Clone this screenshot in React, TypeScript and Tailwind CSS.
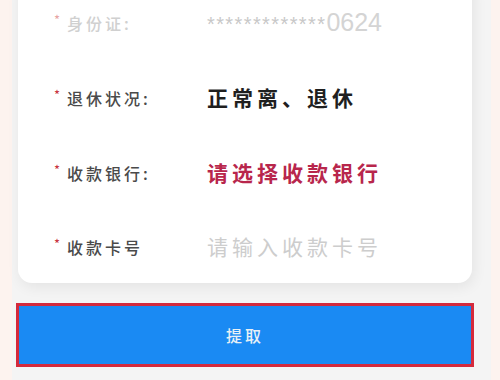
export default function App() {
  const rows = [
    { label: "身份证:", value: "*************0624", kind: "id", faded: true },
    { label: "退休状况:", value: "正常离、退休", kind: "bold" },
    { label: "收款银行:", value: "请选择收款银行", kind: "red" },
    { label: "收款卡号", value: "请输入收款卡号", kind: "placeholder" },
  ];

  return (
    <div
      className="w-[500px] h-[380px] overflow-hidden bg-[#fdf3ef] pl-[12px] pr-[9px]"
      style={{ fontFamily: '"Noto Sans CJK SC", "Noto Sans", sans-serif' }}
    >
      <div className="h-full bg-[#f4f4f4] flex flex-col">
        {/* form card */}
        <div className="ml-[6px] w-[454px] -mt-[15px] bg-white rounded-b-[14px] shadow-[2px_4px_14px_rgba(0,0,0,0.07)]">
          {rows.map((r, i) => (
            <div key={i} className={`flex items-center ${i === 3 ? "h-[73px]" : "h-[75px]"}`}>
              <div className="w-[189px] pl-[36px] flex items-center shrink-0">
                <span className={`text-[13px] leading-none mr-[7px] -mt-[6px] ${r.faded ? "text-[#e7a4a4]" : "text-[#c8323e]"}`}>*</span>
                <span
                  className={`text-[16px] tracking-[3px] font-medium ${r.faded ? "text-[#d0d0d0]" : "text-[#4a4a4a]"}`}
                >
                  {r.label}
                </span>
              </div>
              {r.kind === "id" && (
                <span className="text-[25px] text-[#d4d4d4]" style={{ fontFamily: '"Liberation Sans", Arial, sans-serif' }}>
                  <span className="text-[20px] tracking-[1.4px] text-[#c8c8c8]">*************</span>
                  0624
                </span>
              )}
              {r.kind === "bold" && (
                <span className="text-[21px] font-semibold tracking-[4px] text-[#1f1f1f]">{r.value}</span>
              )}
              {r.kind === "red" && (
                <span className="text-[21px] font-semibold tracking-[4px] text-[#b8264c]">{r.value}</span>
              )}
              {r.kind === "placeholder" && (
                <span className="text-[21px] tracking-[4px] text-[#cdcdcd]">{r.value}</span>
              )}
            </div>
          ))}
        </div>

        {/* submit */}
        <div className="mt-[20px] ml-[4px] w-[458px] h-[64px] border-[3px] border-[#d42a3c] bg-[#1a8af3] flex items-center justify-center">
          <span className="text-[16px] tracking-[3px] text-[#e8f0f6] font-medium">提取</span>
        </div>
      </div>
    </div>
  );
}
